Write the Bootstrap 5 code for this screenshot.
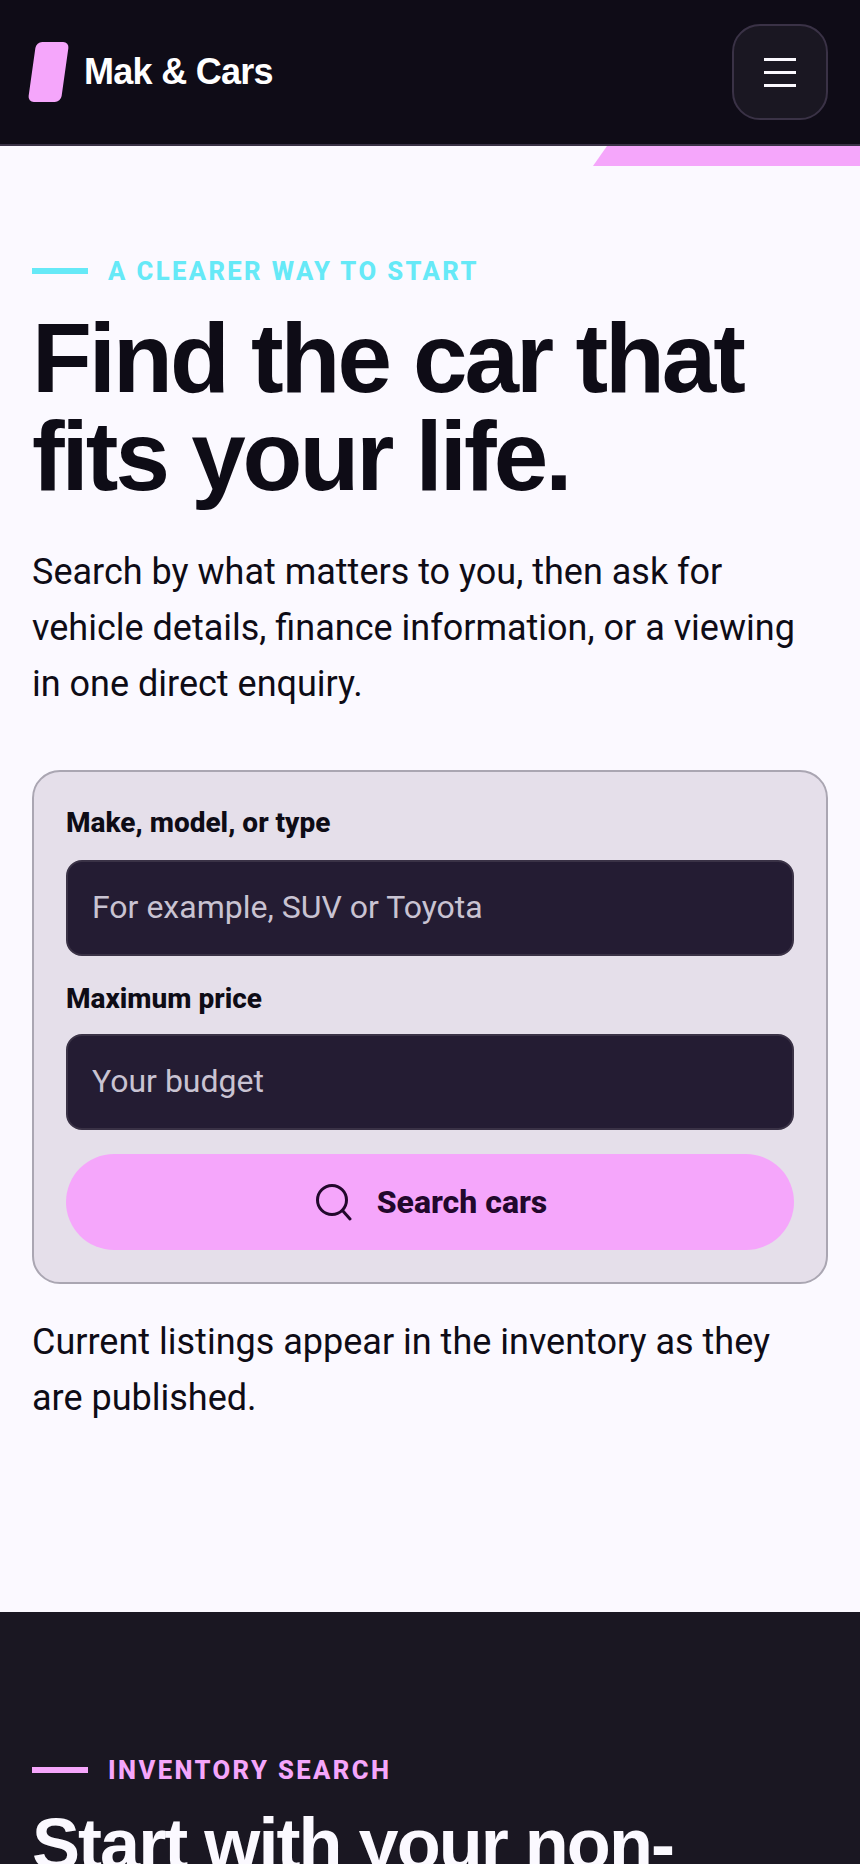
<!DOCTYPE html>
<html lang="en">
<head>
  <meta charset="UTF-8">
  <title>Mak &amp; Cars</title>
  <link href="https://cdn.jsdelivr.net/npm/bootstrap@5.3.2/dist/css/bootstrap.min.css" rel="stylesheet">
  <style>
    html, body { height: 1864px; overflow: hidden; }
    body { background: #fbf9ff; color: #0e0c16; font-family: Roboto, sans-serif; }
    .site-header { height: 146px; padding: 0 32px 0 28px; background: #0f0c17; border-bottom: 2px solid #3a3246; }
    .logo-mark { width: 33px; height: 60px; margin-left: 4px; background: #f5a6fb; border-radius: 6px; transform: skewX(-8deg); }
    .logo-text { margin-left: 19px; color: #fff; font: 700 36px "Liberation Sans", sans-serif; letter-spacing: -0.72px; }
    .menu-btn { width: 96px; height: 96px; gap: 10px; background: #1a1722; border: 2px solid #3a3246; border-radius: 28px; }
    .menu-btn span { display: block; width: 32px; height: 3px; background: #fbf9ff; }
    .ribbon { height: 20px; width: 267px; margin-left: auto; background: #f5a6fb; clip-path: polygon(14px 0, 100% 0, 100% 100%, 0 100%); }
    .hero { height: 1446px; padding: 90px 32px 0; }
    .eyebrow { gap: 20px; font-size: 25.6px; font-weight: 800; letter-spacing: 2.4px; line-height: 30px; text-transform: uppercase; }
    .eyebrow::before { content: ""; width: 56px; height: 6px; background: currentColor; }
    .eyebrow-cyan { color: #66e9f7; }
    .eyebrow-pink { color: #f5a6fb; }
    .hero-title { margin: 23px 0 0; font: 700 98px/98px "Liberation Sans", sans-serif; letter-spacing: -3.02px; }
    .body-copy { max-width: 770px; margin: 0; font-size: 36px; line-height: 56px; }
    .hero-title + .body-copy { margin-top: 39px; }
    .search-box { margin: 58px 0 30px; padding: 32px; background: #e5dfea; border: 2px solid #aaa6b2; border-radius: 28px; }
    .search-box label { display: block; font-size: 28px; font-weight: 800; line-height: 38px; margin-bottom: 18px; }
    .search-box .field-gap { margin-bottom: 23px; }
    .search-box .second-field label { line-height: 40px; margin-bottom: 15px; }
    .search-box .form-control { height: 96px; padding: 0 24px 2px; background: #241c33; border: 2px solid #3a3246; border-radius: 16px; color: #fff; font-size: 32px; }
    .search-box .form-control::placeholder { color: #c9c3d2; opacity: 1; }
    .search-btn { height: 96px; padding: 0 0 0 2px; background: #f5a6fb; border: 0; border-radius: 48px; color: #22082c; font-size: 32px; font-weight: 800; gap: 24px; }
    .search-btn:hover { background: #f5a6fb; color: #22082c; }
    .inventory { height: 300px; padding: 143px 32px 0; background: #1a1722; color: #fbf9ff; }
    .inventory-title { margin: 19px 0 0; font: 700 72px/80px "Liberation Sans", sans-serif; letter-spacing: -1.95px; }
  </style>
</head>
<body>
  <header class="site-header d-flex align-items-center justify-content-between">
    <a class="d-flex align-items-center text-decoration-none" href="#">
      <span class="logo-mark"></span>
      <span class="logo-text">Mak &amp; Cars</span>
    </a>
    <button class="menu-btn d-flex flex-column align-items-center justify-content-center p-0" type="button" aria-label="Menu">
      <span></span><span></span><span></span>
    </button>
  </header>
  <div class="ribbon"></div>

  <main>
    <section class="hero">
      <div class="eyebrow eyebrow-cyan d-flex align-items-center">A clearer way to start</div>
      <h1 class="hero-title">Find the car that fits your life.</h1>
      <p class="body-copy">Search by what matters to you, then ask for vehicle details, finance information, or a viewing in one direct enquiry.</p>
      <form class="search-box">
        <div class="field-gap">
          <label for="query">Make, model, or type</label>
          <input id="query" class="form-control" type="text" placeholder="For example, SUV or Toyota">
        </div>
        <div class="second-field mb-4">
          <label for="price">Maximum price</label>
          <input id="price" class="form-control" type="text" placeholder="Your budget">
        </div>
        <button class="search-btn btn w-100 d-flex align-items-center justify-content-center" type="button">
          <svg width="38" height="38" viewBox="0 0 38 38" fill="none" stroke="#22082c" stroke-width="3" stroke-linecap="round"><circle cx="17" cy="17" r="14.5"/><path d="M27.5 27.5 35 36"/></svg>
          Search cars
        </button>
      </form>
      <p class="body-copy">Current listings appear in the inventory as they are published.</p>
    </section>
    <section class="inventory">
      <div class="eyebrow eyebrow-pink d-flex align-items-center">Inventory search</div>
      <h2 class="inventory-title">Start with your non-negotiables.</h2>
    </section>
  </main>
</body>
</html>
